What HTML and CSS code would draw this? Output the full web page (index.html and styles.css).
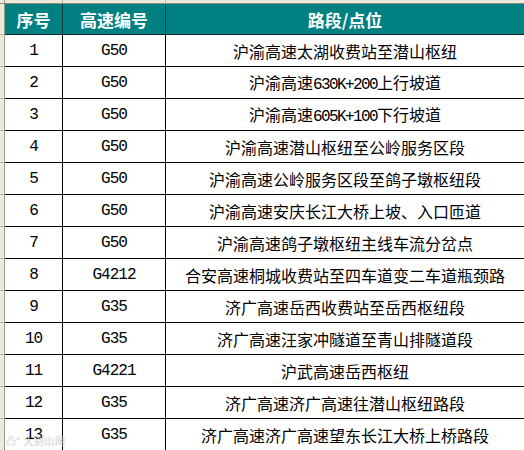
FILE: index.html
```html
<!DOCTYPE html>
<html lang="zh-CN">
<head>
<meta charset="utf-8">
<title>高速路段/点位</title>
<link rel="stylesheet" href="styles.css">
</head>
<body>
<div class="sheet">
  <div class="row top"><div class="hdr"></div><div class="c1"></div><div class="c2"></div><div class="c3"></div></div>
  <div class="row head"><div class="hdr"></div><div class="c1">序号</div><div class="c2">高速编号</div><div class="c3">路段/点位</div></div>
  <div class="row"><div class="hdr"></div><div class="c1 num">1</div><div class="c2 num">G50</div><div class="c3"><span>沪渝高速太湖收费站至潜山枢纽</span></div></div>
  <div class="row"><div class="hdr"></div><div class="c1 num">2</div><div class="c2 num">G50</div><div class="c3"><span>沪渝高速<span class="num">630K+200</span>上行坡道</span></div></div>
  <div class="row"><div class="hdr"></div><div class="c1 num">3</div><div class="c2 num">G50</div><div class="c3"><span>沪渝高速<span class="num">605K+100</span>下行坡道</span></div></div>
  <div class="row"><div class="hdr"></div><div class="c1 num">4</div><div class="c2 num">G50</div><div class="c3"><span>沪渝高速潜山枢纽至公岭服务区段</span></div></div>
  <div class="row"><div class="hdr"></div><div class="c1 num">5</div><div class="c2 num">G50</div><div class="c3"><span>沪渝高速公岭服务区段至鸽子墩枢纽段</span></div></div>
  <div class="row"><div class="hdr"></div><div class="c1 num">6</div><div class="c2 num">G50</div><div class="c3"><span>沪渝高速安庆长江大桥上坡、入口匝道</span></div></div>
  <div class="row"><div class="hdr"></div><div class="c1 num">7</div><div class="c2 num">G50</div><div class="c3"><span>沪渝高速鸽子墩枢纽主线车流分岔点</span></div></div>
  <div class="row"><div class="hdr"></div><div class="c1 num">8</div><div class="c2 num">G4212</div><div class="c3"><span>合安高速桐城收费站至四车道变二车道瓶颈路</span></div></div>
  <div class="row"><div class="hdr"></div><div class="c1 num">9</div><div class="c2 num">G35</div><div class="c3"><span>济广高速岳西收费站至岳西枢纽段</span></div></div>
  <div class="row"><div class="hdr"></div><div class="c1 num">10</div><div class="c2 num">G35</div><div class="c3"><span>济广高速汪家冲隧道至青山排隧道段</span></div></div>
  <div class="row"><div class="hdr"></div><div class="c1 num">11</div><div class="c2 num">G4221</div><div class="c3"><span>沪武高速岳西枢纽</span></div></div>
  <div class="row"><div class="hdr"></div><div class="c1 num">12</div><div class="c2 num">G35</div><div class="c3"><span>济广高速济广高速往潜山枢纽路段</span></div></div>
  <div class="row"><div class="hdr"></div><div class="c1 num">13</div><div class="c2 num">G35</div><div class="c3"><span>济广高速济广高速望东长江大桥上桥路段</span></div></div>
  <div class="watermark">凸° 大别山网</div>
</div>
</body>
</html>
```
FILE: styles.css
```css
html, body {
  margin: 0;
  padding: 0;
  background: #ffffff;
}

.sheet {
  position: relative;
  width: 524px;
  height: 450px;
  overflow: hidden;
  font-family: "Noto Sans CJK SC", "Noto Sans", sans-serif;
  font-size: 16px;
  color: #000;
}

.row {
  display: grid;
  grid-template-columns: 5px 58px 103px 1fr;
  height: 32px;
}

.row > div {
  box-sizing: border-box;
  display: flex;
  align-items: center;
  justify-content: center;
  border-bottom: 1px solid #000;
  white-space: nowrap;
  line-height: 1;
}

.row > .hdr {
  background: #ece9d8;
  border-right: 1px solid #9a988c;
  border-bottom: 1px solid #b4b1a3;
}

.row > .c1,
.row > .c2 {
  border-right: 1px solid #000;
}

.row > .c3 {
  padding-top: 1px;
}

.top {
  height: 4px;
}

.top > div {
  background: #ece9d8;
}

.row.top > div {
  border-bottom: 1px solid #8e8c80;
}

.row.top > .c1,
.row.top > .c2 {
  border-right: 1px solid #b4b1a3;
}

.head {
  height: 31px;
}

.head > .c1,
.head > .c2,
.head > .c3 {
  background: #008080;
  color: #ffffff;
  font-weight: bold;
  font-size: 17px;
  border-bottom: 1px solid #0b2a2a;
}

.head > .c1,
.head > .c2 {
  border-right: 1px solid #173737;
}

.row > .num {
  font-family: "Liberation Mono", "DejaVu Sans Mono", monospace;
  font-size: 16px;
  letter-spacing: -1px;
  padding-top: 1px;
}

.c3 .num {
  font-family: "Liberation Mono", "DejaVu Sans Mono", monospace;
  font-size: 16px;
  letter-spacing: -1.6px;
}

.watermark {
  position: absolute;
  left: 6px;
  top: 435px;
  font-size: 10px;
  line-height: 12px;
  color: rgba(235, 235, 235, 0.85);
  text-shadow: 0 0 1px rgba(120, 120, 120, 0.5);
  letter-spacing: 0.5px;
}
```
